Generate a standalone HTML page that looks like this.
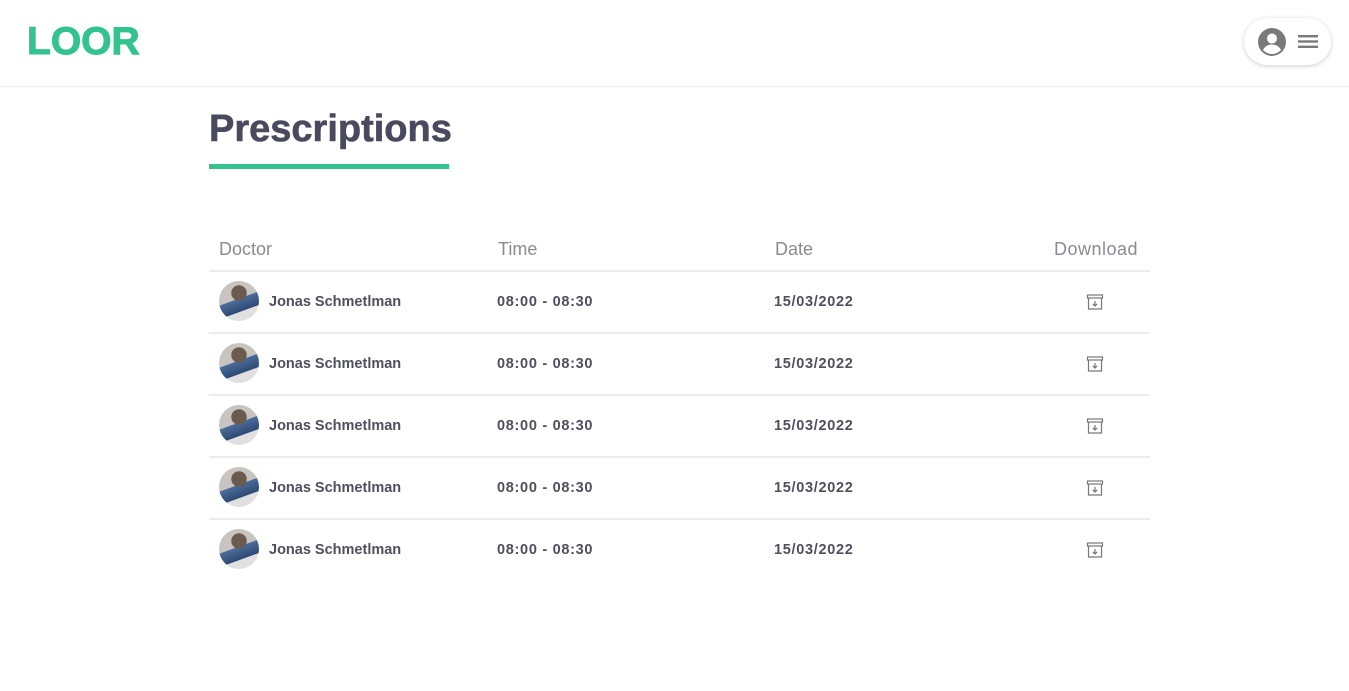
<!DOCTYPE html>
<html><head><meta charset="utf-8"><style>
*{margin:0;padding:0;box-sizing:border-box}
body{width:1349px;height:691px;background:#fff;font-family:"Liberation Sans",sans-serif;position:relative;overflow:hidden}
.hdr{position:absolute;left:0;top:0;width:1349px;height:87px;border-bottom:1px solid #ececec}
.logo{position:absolute;left:27px;top:20px;font-size:39px;font-weight:bold;color:#33c38e;-webkit-text-stroke:1px #33c38e}
.menu{position:absolute;left:1244px;top:18px;width:87px;height:47px;border-radius:24px;box-shadow:0 1px 5px rgba(0,0,0,.2);background:#fff}
h1{position:absolute;left:209px;top:108px;font-size:38px;font-weight:bold;color:#4a4a5e;-webkit-text-stroke:0.6px #4a4a5e}
.ul{position:absolute;left:209px;top:164px;width:240px;height:5px;background:#33c38e}
.th{position:absolute;top:239px;font-size:18px;color:#8a8a94}
.line{position:absolute;left:209px;width:941px;height:2px;background:#ececec}
.row{position:absolute;left:209px;width:941px;height:62px}
.av{position:absolute;left:10px;top:10px;width:40px;height:40px;border-radius:50%;background:radial-gradient(circle at 50% 30%,#6b5a4e 0 22%,transparent 23%),linear-gradient(160deg,#c8c4c0 0 45%,#4b6c9a 46%,#2e4a74 70%,#e0e0e0 71%);}
.t{position:absolute;top:23px;font-size:14.5px;font-weight:bold;color:#4f4f5f}
.tm{letter-spacing:0.7px}
.dl{position:absolute;left:877px;top:22px}
</style></head><body>
<div class="hdr"><div class="logo">LOOR</div>
<div class="menu">
<svg style="position:absolute;left:13px;top:9px" width="30" height="30" viewBox="0 0 30 30"><circle cx="15" cy="15" r="14" fill="#7a7a7a"/><circle cx="15" cy="11.5" r="5" fill="#fff"/><path d="M6 23c2-4 5.5-5.5 9-5.5s7 1.5 9 5.5c-2.5 2.5-5.5 4-9 4s-6.5-1.5-9-4z" fill="#fff"/></svg>
<svg style="position:absolute;left:54px;top:16px" width="20" height="15" viewBox="0 0 20 15"><rect y="1" width="20" height="2.4" fill="#7a7a7a"/><rect y="6.3" width="20" height="2.4" fill="#7a7a7a"/><rect y="11.6" width="20" height="2.4" fill="#7a7a7a"/></svg>
</div></div>
<h1>Prescriptions</h1><div class="ul"></div>
<div class="th" style="left:219px">Doctor</div>
<div class="th" style="left:498px">Time</div>
<div class="th" style="left:775px">Date</div>
<div class="th" style="left:1054px;letter-spacing:0.5px">Download</div>
<div class="line" style="top:270px"></div>
<div class="row" style="top:271px"><div class="av"></div><div class="t" style="left:60px">Jonas Schmetlman</div><div class="t tm" style="left:288px">08:00 - 08:30</div><div class="t tm" style="left:565px">15/03/2022</div><svg class="dl" width="18" height="18" viewBox="0 0 18 18" fill="none" stroke="#777" stroke-width="1.2"><rect x="1.5" y="2" width="15" height="3"/><path d="M2.5 5v11h13V5M9 8v5M6.8 10.8L9 13l2.2-2.2"/></svg></div>
<div class="line" style="top:332px"></div>
<div class="row" style="top:333px"><div class="av"></div><div class="t" style="left:60px">Jonas Schmetlman</div><div class="t tm" style="left:288px">08:00 - 08:30</div><div class="t tm" style="left:565px">15/03/2022</div><svg class="dl" width="18" height="18" viewBox="0 0 18 18" fill="none" stroke="#777" stroke-width="1.2"><rect x="1.5" y="2" width="15" height="3"/><path d="M2.5 5v11h13V5M9 8v5M6.8 10.8L9 13l2.2-2.2"/></svg></div>
<div class="line" style="top:394px"></div>
<div class="row" style="top:395px"><div class="av"></div><div class="t" style="left:60px">Jonas Schmetlman</div><div class="t tm" style="left:288px">08:00 - 08:30</div><div class="t tm" style="left:565px">15/03/2022</div><svg class="dl" width="18" height="18" viewBox="0 0 18 18" fill="none" stroke="#777" stroke-width="1.2"><rect x="1.5" y="2" width="15" height="3"/><path d="M2.5 5v11h13V5M9 8v5M6.8 10.8L9 13l2.2-2.2"/></svg></div>
<div class="line" style="top:456px"></div>
<div class="row" style="top:457px"><div class="av"></div><div class="t" style="left:60px">Jonas Schmetlman</div><div class="t tm" style="left:288px">08:00 - 08:30</div><div class="t tm" style="left:565px">15/03/2022</div><svg class="dl" width="18" height="18" viewBox="0 0 18 18" fill="none" stroke="#777" stroke-width="1.2"><rect x="1.5" y="2" width="15" height="3"/><path d="M2.5 5v11h13V5M9 8v5M6.8 10.8L9 13l2.2-2.2"/></svg></div>
<div class="line" style="top:518px"></div>
<div class="row" style="top:519px"><div class="av"></div><div class="t" style="left:60px">Jonas Schmetlman</div><div class="t tm" style="left:288px">08:00 - 08:30</div><div class="t tm" style="left:565px">15/03/2022</div><svg class="dl" width="18" height="18" viewBox="0 0 18 18" fill="none" stroke="#777" stroke-width="1.2"><rect x="1.5" y="2" width="15" height="3"/><path d="M2.5 5v11h13V5M9 8v5M6.8 10.8L9 13l2.2-2.2"/></svg></div>
</body></html>
